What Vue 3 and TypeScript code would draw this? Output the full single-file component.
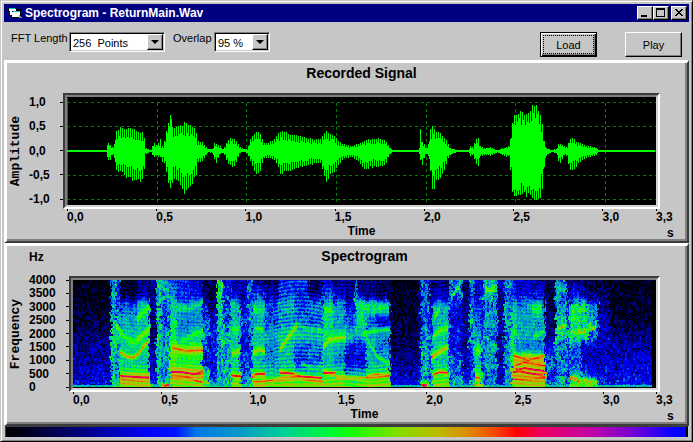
<script setup lang="ts">
import { onMounted, ref } from 'vue'

type Envelope = [x: number, up: number, down: number]
type Segment = [from: number, to: number, profile: number[]]
type Ridge = { level: number; width: number; points: [number, number][] }

const fftLengths = ['128  Points', '256  Points', '512  Points']
const overlaps = ['50 %', '75 %', '95 %']
const fftLength = ref('256  Points')
const overlap = ref('95 %')

const times = ['0,0', '0,5', '1,0', '1,5', '2,0', '2,5', '3,0', '3,3']
const amplitudes = ['1,0', '0,5', '0,0', '-0,5', '-1,0']
const frequencies = ['4000', '3500', '3000', '2500', '2000', '1500', '1000', '500', '0']

/* Repeatable pseudo-random value in 0..1 for a grid cell */
function hash(x: number, y: number): number {
  let h = Math.imul(x + 101, 374761393) ^ Math.imul(y + 57, 668265263)
  h = Math.imul(h ^ (h >>> 13), 1274126177)
  return ((h ^ (h >>> 16)) >>> 0) / 4294967296
}

/* ---- Recorded signal ---- */
const waveWidth = 589
const waveHeight = 108
const envelope: Envelope[] = [
  [0, 0, 0], [8, 0, 0], [10, 1, 0], [12, 0, 0], [39, 0, 0], [40, 8, 9], [43, 5, 8], [45, 3, 3], [47, 6, 6],
  [48, 16, 18], [50, 20, 21], [54, 24, 21], [60, 22, 27], [66, 21, 28], [71, 19, 30], [75, 17, 28],
  [77, 12, 18], [78, 2, 2], [84, 0, 0], [86, 8, 6], [89, 5, 4], [92, 8, 5], [93, 11, 5], [94, 4, 11],
  [96, 3, 8], [98, 14, 16], [100, 26, 26], [101, 28, 30], [103, 34, 38], [104, 37, 34], [105, 22, 32],
  [108, 24, 28], [112, 25, 31], [117, 27, 41], [122, 25, 37], [126, 23, 30], [129, 18, 22], [130, 9, 12],
  [134, 9, 10], [138, 4, 5], [141, 1, 0], [145, 1, 1], [147, 7, 7], [149, 6, 12], [152, 5, 3],
  [155, 1, 1], [158, 4, 4], [160, 9, 12], [164, 13, 15], [168, 10, 13], [172, 4, 2], [176, 1, 0],
  [180, 1, 1], [183, 11, 10], [187, 17, 20], [190, 18, 23], [193, 17, 18], [196, 8, 7], [200, 7, 6],
  [206, 10, 7], [210, 17, 12], [213, 19, 22], [218, 18, 21], [224, 16, 18], [230, 15, 16], [236, 13, 15],
  [242, 12, 13], [248, 11, 12], [254, 12, 12], [256, 16, 24], [259, 20, 30], [262, 17, 25], [266, 16, 22],
  [270, 10, 15], [276, 6, 7], [284, 4, 5], [290, 6, 9], [296, 9, 17], [302, 11, 16], [310, 12, 15],
  [318, 10, 13], [322, 3, 3], [325, 0, 0], [351, 0, 0], [352, 3, 3], [353, 21, 8], [355, 8, 14],
  [357, 6, 6], [359, 2, 2], [361, 6, 4], [363, 22, 20], [365, 25, 39], [367, 21, 38], [369, 18, 28],
  [373, 17, 27], [377, 13, 18], [380, 8, 8], [383, 2, 3], [386, 1, 2], [390, 0, 0], [401, 0, 0],
  [403, 4, 4], [406, 2, 3], [408, 12, 11], [411, 13, 15], [413, 4, 4], [417, 2, 3], [423, 3, 4],
  [430, 0, 0], [436, 2, 4], [440, 3, 5], [442, 5, 4], [444, 18, 30], [446, 34, 49], [449, 38, 47],
  [455, 37, 42], [460, 38, 44], [464, 42, 44], [467, 48, 50], [470, 44, 47], [473, 34, 46],
  [475, 26, 40], [477, 9, 15], [479, 2, 4], [484, 0, 0], [489, 1, 1], [491, 6, 9], [493, 6, 12],
  [497, 4, 3], [500, 3, 4], [502, 11, 19], [505, 12, 19], [509, 9, 15], [514, 6, 9], [520, 4, 6],
  [528, 3, 4], [531, 0, 0], [587, 0, 0],
]

function buildWave(): string {
  const parts: string[] = []
  let k = 0
  for (let x = 0; x <= 587; x++) {
    while (k < envelope.length - 2 && envelope[k + 1][0] <= x) k++
    const a = envelope[k]
    const b = envelope[k + 1]
    const t = Math.min(1, (x - a[0]) / (b[0] - a[0]))
    let up = a[1] + (b[1] - a[1]) * t
    let down = a[2] + (b[2] - a[2]) * t
    if (x % 2 === 0) {
      const loud = up > 30
      up *= (loud ? 0.66 : 0.48) + hash(x, 3) * 0.2
      down *= (loud ? 0.72 : 0.48) + hash(x, 9) * 0.18
    } else {
      up *= 0.92 + hash(x, 4) * 0.12
      down *= 0.9 + hash(x, 5) * 0.14
    }
    parts.push(`M${x} ${53 - Math.round(up)}h1V${55 + Math.round(down)}h-1z`)
  }
  return parts.join('')
}
const wave = buildWave()
const gridRows = [5, 29, 54, 78, 102]
const gridColumns = [90, 179, 269, 359, 448, 538]

/* ---- Spectrogram ---- */
const specWidth = 583
const specHeight = 108
const canvas = ref<HTMLCanvasElement | null>(null)

const palette: [number, number, number, number][] = [
  [0, 0, 0, 0], [0.03, 0, 0, 20], [0.12, 0, 0, 140], [0.21, 0, 0, 250], [0.25, 0, 20, 255],
  [0.29, 0, 110, 230], [0.34, 0, 150, 205], [0.41, 0, 210, 145], [0.48, 0, 250, 50], [0.51, 20, 255, 0],
  [0.57, 120, 225, 0], [0.63, 185, 190, 0], [0.68, 220, 140, 0], [0.72, 245, 70, 0], [0.75, 255, 0, 0],
  [0.79, 235, 0, 100], [0.86, 195, 0, 165], [0.92, 120, 0, 210], [0.98, 10, 0, 255], [1, 0, 0, 255],
]

/* Level at 4000, 3500 ... 0 Hz for each stretch of time */
const segments: Segment[] = [
  [0, 38, [0.02, 0.03, 0.04, 0.06, 0.09, 0.13, 0.15, 0.17, 0.22]],
  [38, 43, [0.34, 0.36, 0.38, 0.42, 0.43, 0.38, 0.38, 0.39, 0.46]],
  [43, 47, [0.25, 0.22, 0.28, 0.34, 0.42, 0.35, 0.36, 0.34, 0.44]],
  [47, 64, [0.05, 0.06, 0.31, 0.36, 0.4, 0.42, 0.41, 0.46, 0.6]],
  [64, 76, [0.11, 0.16, 0.42, 0.41, 0.4, 0.44, 0.4, 0.46, 0.6]],
  [76, 83, [0.14, 0.1, 0.12, 0.12, 0.1, 0.14, 0.14, 0.17, 0.35]],
  [83, 88, [0.42, 0.4, 0.39, 0.4, 0.42, 0.38, 0.37, 0.36, 0.42]],
  [88, 97, [0.35, 0.36, 0.28, 0.26, 0.34, 0.35, 0.35, 0.32, 0.45]],
  [97, 103, [0.27, 0.33, 0.42, 0.43, 0.46, 0.5, 0.54, 0.58, 0.57]],
  [103, 117, [0.24, 0.25, 0.36, 0.31, 0.36, 0.47, 0.48, 0.58, 0.58]],
  [117, 129, [0.2, 0.22, 0.36, 0.32, 0.4, 0.5, 0.48, 0.56, 0.58]],
  [129, 136, [0.08, 0.12, 0.22, 0.3, 0.34, 0.26, 0.2, 0.46, 0.54]],
  [136, 144, [0.1, 0.07, 0.1, 0.18, 0.24, 0.22, 0.2, 0.24, 0.38]],
  [144, 150, [0.44, 0.46, 0.42, 0.42, 0.38, 0.38, 0.38, 0.35, 0.4]],
  [150, 158, [0.2, 0.24, 0.27, 0.26, 0.36, 0.38, 0.35, 0.36, 0.42]],
  [158, 167, [0.14, 0.18, 0.4, 0.38, 0.4, 0.42, 0.41, 0.5, 0.6]],
  [167, 174, [0.14, 0.15, 0.2, 0.26, 0.22, 0.2, 0.26, 0.25, 0.42]],
  [174, 179, [0.3, 0.27, 0.31, 0.32, 0.3, 0.22, 0.24, 0.3, 0.5]],
  [179, 192, [0.12, 0.27, 0.4, 0.36, 0.4, 0.41, 0.39, 0.5, 0.6]],
  [192, 206, [0.1, 0.15, 0.29, 0.27, 0.37, 0.32, 0.34, 0.42, 0.58]],
  [206, 222, [0.25, 0.27, 0.38, 0.34, 0.41, 0.4, 0.38, 0.5, 0.6]],
  [222, 235, [0.27, 0.24, 0.28, 0.31, 0.4, 0.29, 0.25, 0.4, 0.6]],
  [235, 250, [0.08, 0.12, 0.33, 0.28, 0.4, 0.32, 0.29, 0.42, 0.6]],
  [250, 260, [0.2, 0.28, 0.43, 0.42, 0.43, 0.4, 0.4, 0.5, 0.6]],
  [260, 272, [0.12, 0.18, 0.36, 0.36, 0.38, 0.37, 0.31, 0.48, 0.6]],
  [272, 282, [0.12, 0.14, 0.24, 0.28, 0.39, 0.21, 0.18, 0.34, 0.57]],
  [282, 284, [0.27, 0.33, 0.43, 0.38, 0.42, 0.25, 0.23, 0.38, 0.57]],
  [284, 293, [0.1, 0.14, 0.42, 0.43, 0.4, 0.24, 0.2, 0.38, 0.58]],
  [293, 303, [0.12, 0.12, 0.4, 0.29, 0.36, 0.38, 0.37, 0.48, 0.6]],
  [303, 317, [0.08, 0.1, 0.35, 0.2, 0.35, 0.31, 0.36, 0.5, 0.6]],
  [317, 345, [0.02, 0.04, 0.04, 0.05, 0.07, 0.09, 0.12, 0.17, 0.22]],
  [345, 348, [0.08, 0.1, 0.12, 0.14, 0.15, 0.16, 0.17, 0.2, 0.33]],
  [348, 356, [0.27, 0.31, 0.29, 0.28, 0.31, 0.34, 0.38, 0.36, 0.55]],
  [356, 359, [0.15, 0.13, 0.17, 0.17, 0.25, 0.3, 0.27, 0.3, 0.35]],
  [359, 376, [0.1, 0.16, 0.37, 0.38, 0.4, 0.42, 0.4, 0.48, 0.6]],
  [376, 389, [0.31, 0.29, 0.21, 0.18, 0.22, 0.22, 0.28, 0.29, 0.4]],
  [389, 396, [0.09, 0.1, 0.12, 0.13, 0.14, 0.14, 0.15, 0.18, 0.3]],
  [396, 401, [0.36, 0.28, 0.34, 0.35, 0.32, 0.3, 0.25, 0.26, 0.4]],
  [401, 408, [0.2, 0.17, 0.26, 0.31, 0.36, 0.44, 0.4, 0.48, 0.6]],
  [408, 411, [0.2, 0.24, 0.26, 0.25, 0.27, 0.34, 0.24, 0.27, 0.42]],
  [411, 424, [0.38, 0.37, 0.31, 0.35, 0.32, 0.34, 0.34, 0.27, 0.35]],
  [424, 431, [0.17, 0.12, 0.13, 0.15, 0.13, 0.14, 0.14, 0.15, 0.25]],
  [431, 438, [0.35, 0.28, 0.35, 0.34, 0.31, 0.34, 0.34, 0.34, 0.36]],
  [438, 443, [0.25, 0.26, 0.38, 0.41, 0.46, 0.42, 0.5, 0.64, 0.57]],
  [443, 472, [0.15, 0.21, 0.35, 0.36, 0.37, 0.31, 0.54, 0.64, 0.6]],
  [472, 482, [0.07, 0.07, 0.08, 0.09, 0.13, 0.2, 0.28, 0.25, 0.35]],
  [482, 494, [0.35, 0.35, 0.31, 0.42, 0.4, 0.35, 0.3, 0.32, 0.38]],
  [494, 496, [0.15, 0.13, 0.18, 0.25, 0.26, 0.2, 0.22, 0.26, 0.35]],
  [496, 508, [0.09, 0.22, 0.44, 0.45, 0.46, 0.3, 0.28, 0.35, 0.55]],
  [508, 516, [0.07, 0.16, 0.42, 0.43, 0.41, 0.19, 0.18, 0.27, 0.52]],
  [516, 525, [0.05, 0.1, 0.36, 0.34, 0.27, 0.16, 0.17, 0.23, 0.48]],
  [525, 536, [0.06, 0.1, 0.12, 0.16, 0.17, 0.16, 0.18, 0.21, 0.28]],
  [536, 579, [0.02, 0.04, 0.04, 0.06, 0.1, 0.15, 0.18, 0.2, 0.25]],
]

const ridges: Ridge[] = [
  { level: 0.52, width: 3, points: [[43, 46], [50, 55], [56, 60], [62, 61], [69, 54], [76, 48]] },
  { level: 0.57, width: 3, points: [[64, 60], [70, 54], [76, 49]] },
  { level: 0.68, width: 2, points: [[47, 72], [53, 76], [60, 77], [65, 73], [70, 66], [76, 60]] },
  { level: 0.53, width: 3, points: [[64, 40], [68, 33], [76, 28]] },
  { level: 0.66, width: 6, points: [[47, 98], [76, 98]] },
  { level: 0.78, width: 1, points: [[47, 96], [57, 96], [76, 97]] },
  { level: 0.62, width: 4, points: [[98, 68], [112, 70], [129, 70]] },
  { level: 0.71, width: 1, points: [[99, 67], [113, 71], [129, 69]] },
  { level: 0.66, width: 5, points: [[98, 92], [129, 94]] },
  { level: 0.78, width: 1, points: [[98, 91], [111, 92], [120, 94], [129, 91]] },
  { level: 0.73, width: 1, points: [[98, 97], [113, 97], [129, 102]] },
  { level: 0.44, width: 3, points: [[103, 27], [115, 28], [129, 21]] },
  { level: 0.5, width: 3, points: [[108, 62], [120, 54], [129, 51]] },
  { level: 0.7, width: 2, points: [[88, 105], [95, 105]] },
  { level: 0.52, width: 2, points: [[159, 49], [165, 49]] },
  { level: 0.6, width: 3, points: [[159, 73], [166, 71]] },
  { level: 0.73, width: 2, points: [[158, 95], [167, 96]] },
  { level: 0.47, width: 4, points: [[181, 28], [190, 29]] },
  { level: 0.54, width: 2, points: [[182, 48], [189, 49]] },
  { level: 0.61, width: 3, points: [[180, 72], [186, 69], [191, 71]] },
  { level: 0.73, width: 2, points: [[179, 96], [186, 93], [191, 94]] },
  { level: 0.6, width: 3, points: [[207, 68], [214, 58], [223, 46]] },
  { level: 0.74, width: 2, points: [[207, 92], [216, 93], [228, 96], [248, 98]] },
  { level: 0.67, width: 2, points: [[180, 102], [206, 99], [222, 97], [250, 102]] },
  { level: 0.44, width: 2, points: [[223, 43], [234, 49], [250, 51]] },
  { level: 0.44, width: 2, points: [[228, 83], [239, 88], [250, 86]] },
  { level: 0.53, width: 3, points: [[251, 29], [258, 30]] },
  { level: 0.45, width: 2, points: [[244, 49], [252, 51], [272, 52]] },
  { level: 0.6, width: 3, points: [[250, 67], [255, 60], [262, 58], [272, 57]] },
  { level: 0.74, width: 2, points: [[250, 92], [262, 93]] },
  { level: 0.66, width: 2, points: [[262, 97], [288, 98], [316, 95]] },
  { level: 0.71, width: 1, points: [[293, 96], [303, 94], [316, 95]] },
  { level: 0.45, width: 5, points: [[286, 25], [295, 28], [305, 28], [315, 29]] },
  { level: 0.5, width: 2, points: [[288, 34], [291, 52], [298, 67], [304, 77], [316, 83]] },
  { level: 0.5, width: 2, points: [[290, 54], [302, 50], [316, 49]] },
  { level: 0.78, width: 2, points: [[348, 105], [353, 105]] },
  { level: 0.53, width: 3, points: [[361, 36], [366, 29]] },
  { level: 0.56, width: 3, points: [[360, 56], [367, 50], [374, 48]] },
  { level: 0.64, width: 3, points: [[358, 77], [366, 71], [374, 67]] },
  { level: 0.72, width: 2, points: [[360, 95], [366, 91], [374, 93]] },
  { level: 0.55, width: 3, points: [[403, 70], [406, 70]] },
  { level: 0.68, width: 3, points: [[402, 97], [406, 98]] },
  { level: 0.46, width: 3, points: [[378, 15], [386, 7]] },
  { level: 0.5, width: 3, points: [[412, 9], [421, 9]] },
  { level: 0.48, width: 6, points: [[459, 29], [468, 29]] },
  { level: 0.5, width: 2, points: [[460, 56], [471, 51]] },
  { level: 0.65, width: 5, points: [[440, 79], [470, 79]] },
  { level: 0.65, width: 5, points: [[440, 93], [470, 93]] },
  { level: 0.74, width: 1, points: [[440, 75], [455, 80], [471, 75]] },
  { level: 0.75, width: 1, points: [[440, 86], [450, 82], [471, 85]] },
  { level: 0.79, width: 1, points: [[440, 92], [451, 87], [471, 91]] },
  { level: 0.76, width: 1, points: [[443, 89], [457, 93], [471, 96]] },
  { level: 0.71, width: 1, points: [[440, 98], [455, 99], [471, 98]] },
  { level: 0.56, width: 3, points: [[484, 47], [492, 46]] },
  { level: 0.58, width: 2, points: [[497, 52], [509, 51], [522, 47]] },
  { level: 0.66, width: 3, points: [[497, 98], [504, 99]] },
  { level: 0.6, width: 3, points: [[504, 99], [512, 101], [523, 102]] },
]

function paletteColour(value: number): [number, number, number] {
  const v = Math.max(0, Math.min(1, value))
  let i = 0
  while (i < palette.length - 2 && palette[i + 1][0] < v) i++
  const a = palette[i]
  const b = palette[i + 1]
  const t = (v - a[0]) / (b[0] - a[0])
  return [a[1] + (b[1] - a[1]) * t, a[2] + (b[2] - a[2]) * t, a[3] + (b[3] - a[3]) * t]
}

function ridgeLevel(x: number, y: number, current: number): number {
  let level = current
  for (const ridge of ridges) {
    const pts = ridge.points
    if (x < pts[0][0] || x > pts[pts.length - 1][0]) continue
    let i = 0
    while (i < pts.length - 2 && pts[i + 1][0] < x) i++
    const [x0, y0] = pts[i]
    const [x1, y1] = pts[i + 1]
    const distance = Math.abs(y - (y0 + ((y1 - y0) * (x - x0)) / (x1 - x0)))
    const weight = Math.exp(-(distance * distance) / (ridge.width * ridge.width * 1.2))
    if (ridge.level > level) level += (ridge.level - level) * weight
  }
  return level
}

function drawSpectrogram(target: HTMLCanvasElement): void {
  const context = target.getContext('2d')
  if (!context) return
  const image = context.createImageData(specWidth, specHeight)
  for (let x = 0; x < specWidth; x++) {
    for (let y = 0; y < specHeight; y++) {
      let value = 0
      if (x < 579 && y < specHeight - 1) {
        /* ragged borders between neighbouring stretches */
        const jitter = Math.round((hash(x >> 1, y >> 1) - 0.5) * 3 + (hash(3, y >> 2) - 0.5) * 2)
        const sx = Math.max(0, Math.min(578, x + jitter))
        const segment = segments.find((s) => sx >= s[0] && sx < s[1]) ?? segments[0]
        const warped = Math.max(0, Math.min(107, y + (hash(x >> 2, 12) - 0.5) * 5))
        const position = (y > 84 ? y : warped) / 13.5
        const row = Math.min(7, Math.floor(position))
        const raw = position - row
        const t = raw * raw * (3 - 2 * raw)
        value = segment[2][row] * (1 - t) + segment[2][row + 1] * t
        value = ridgeLevel(x, y, value)
        const voiced = segment[2][8] > 0.56
        if (voiced) {
          const curved = x > 200 && x < 250
          const bend = curved ? Math.pow((x - 226) / 9, 2) * (1 - y / 130) : Math.sin(x / 9) * 1.8
          const depth = y > 84 ? 0.055 : curved ? 0.05 : 0.024
          value += depth * Math.sin(y * 1.65 - bend)
        }
        const fine = hash(x, y) - 0.5
        const coarse = hash(x >> 1, (y >> 1) + 400) - 0.5
        const blotch = hash((x >> 1) + 900, (y >> 2) + 700) - 0.5
        const grain = voiced ? (value > 0.5 ? 0.025 : 0.07) : value > 0.24 ? 0.15 : 0.1
        value += grain * (fine * 0.8 + coarse + blotch * 0.8)
        if (value < 0.3 && hash(x + 31, y + 77) > 0.94) value *= 0.3
        if (voiced && value < 0.46 && x % 3 === 0 && y % 3 === 0) value -= 0.05
        if (y >= 105) value = Math.max(value, 0.38 + fine * 0.1)
      }
      const [r, g, b] = paletteColour(value)
      const offset = (y * specWidth + x) * 4
      image.data[offset] = r
      image.data[offset + 1] = g
      image.data[offset + 2] = b
      image.data[offset + 3] = 255
    }
  }
  context.putImageData(image, 0, 0)
}

onMounted(() => {
  if (canvas.value) drawSpectrogram(canvas.value)
})
</script>

<template>
  <main class="window">
    <header class="titlebar">
      <svg class="app-icon" width="16" height="14" viewBox="0 0 16 14" shape-rendering="crispEdges" aria-hidden="true">
        <path fill="#000" d="M0 2h9v1h4v9H4v-2H1V6H0z" />
        <path fill="#fff" d="M1 3h7v2H4v1h8v5H4V9H2V5H1z" />
        <path fill="#00c8c8" d="M1 2h6v1H1zM5 5h7v1H5z" />
        <path fill="#8a8a8a" d="M11 9h1v1h1v1h1v1h-3z" />
      </svg>
      <h1>Spectrogram - ReturnMain.Wav</h1>
      <div class="caption-buttons">
        <button type="button" aria-label="Minimize">
          <svg width="12" height="10" viewBox="0 0 12 10" shape-rendering="crispEdges"><path d="M2 7h6v2H2z" /></svg>
        </button>
        <button type="button" aria-label="Maximize">
          <svg width="12" height="10" viewBox="0 0 12 10" shape-rendering="crispEdges">
            <path fill-rule="evenodd" d="M1 0h9v9H1zM2 2v6h7V2z" />
          </svg>
        </button>
        <button type="button" class="close" aria-label="Close">
          <svg width="12" height="10" viewBox="0 0 12 10" shape-rendering="crispEdges">
            <path d="M2 1h2v1h1v1h2V2h1V1h2v1H9v1H8v1H7v1h1v1h1v1h1v1H8V7H7V6H5v1H4v1H2V7h1V6h1V5h1V4H4V3H3V2H2z" />
          </svg>
        </button>
      </div>
    </header>

    <div class="toolbar">
      <label class="label-fft" for="fft-length">FFT Length</label>
      <span class="combo combo-fft">
        <select id="fft-length" v-model="fftLength">
          <option v-for="item in fftLengths" :key="item" :value="item">{{ item.replace('  ', '\u00a0 ') }}</option>
        </select>
        <span class="arrow" aria-hidden="true"></span>
      </span>
      <label class="label-overlap" for="overlap">Overlap</label>
      <span class="combo combo-overlap">
        <select id="overlap" v-model="overlap">
          <option v-for="item in overlaps" :key="item" :value="item">{{ item }}</option>
        </select>
        <span class="arrow" aria-hidden="true"></span>
      </span>
      <div class="actions">
        <button type="button" class="push default"><span>Load</span></button>
        <button type="button" class="push"><span>Play</span></button>
      </div>
    </div>

    <section class="panel signal">
      <h2>Recorded Signal</h2>
      <span class="y-name">Amplitude</span>
      <ol class="y-axis">
        <li v-for="a in amplitudes" :key="a">{{ a }}</li>
      </ol>
      <div class="frame">
        <svg class="plot" :viewBox="`0 0 ${waveWidth} ${waveHeight}`" preserveAspectRatio="none" shape-rendering="crispEdges" role="img" aria-label="Recorded Signal">
          <defs>
            <pattern id="dash-row" width="6" height="1" patternUnits="userSpaceOnUse"><rect width="3" height="1" fill="#008000" /></pattern>
            <pattern id="dash-column" width="1" height="6" patternUnits="userSpaceOnUse"><rect width="1" height="3" fill="#008000" /></pattern>
          </defs>
          <rect :width="waveWidth" :height="waveHeight" fill="#000" />
          <rect width="1" y="1" :height="waveHeight - 1" fill="#008000" />
          <rect v-for="y in gridRows" :key="y" x="0" :y="y" :width="waveWidth" height="1" fill="url(#dash-row)" />
          <rect v-for="x in gridColumns" :key="x" :x="x" y="4" width="1" :height="waveHeight - 4" fill="url(#dash-column)" />
          <path :d="wave" fill="#00ff00" />
        </svg>
      </div>
      <ol class="x-axis">
        <li v-for="t in times" :key="t">{{ t }}</li>
      </ol>
      <span class="x-name">Time</span>
      <span class="x-unit">s</span>
    </section>

    <section class="panel spectrum">
      <span class="y-unit">Hz</span>
      <h2>Spectrogram</h2>
      <span class="y-name">Frequency</span>
      <ol class="y-axis">
        <li v-for="f in frequencies" :key="f">{{ f }}</li>
      </ol>
      <div class="frame">
        <canvas ref="canvas" class="plot" :width="specWidth" :height="specHeight" role="img" aria-label="Spectrogram"></canvas>
      </div>
      <ol class="x-axis">
        <li v-for="t in times" :key="t">{{ t }}</li>
      </ol>
      <span class="x-name">Time</span>
      <span class="x-unit">s</span>
    </section>

    <div class="scale" aria-hidden="true"></div>
  </main>
</template>

<style>
body {
  margin: 0;
  background: #c6c6c6;
}
</style>

<style scoped>
.window {
  box-sizing: border-box;
  padding: 3px;
  background: #c6c6c6;
  border: 1px solid;
  border-color: #c6c6c6 #000 #000 #c6c6c6;
  box-shadow: inset 1px 1px #fff, inset -1px -1px #808080;
  color: #000;
  font-family: 'Liberation Sans', Arial, sans-serif;
  font-size: 11px;
  line-height: 12px;
}

.titlebar {
  display: flex;
  align-items: center;
  height: 18px;
  padding: 0 2px 0 4px;
  background: #000080;
}

.app-icon {
  margin-right: 1px;
}

h1 {
  flex: 1;
  margin: 0;
  color: #fff;
  font-size: 12px;
  line-height: 16px;
}

.caption-buttons {
  display: flex;
}

.caption-buttons button {
  display: block;
  width: 16px;
  height: 14px;
  padding: 1px;
  background: #c6c6c6;
  border: 1px solid;
  border-color: #fff #000 #000 #fff;
  box-shadow: inset -1px -1px #808080;
}

.caption-buttons svg {
  display: block;
}

.caption-buttons .close {
  margin-left: 2px;
}

.toolbar {
  display: flex;
  align-items: flex-start;
  height: 28px;
  padding: 10px 7px 0;
}

.label-fft {
  width: 58px;
}

.label-overlap {
  width: 41px;
  margin-left: 8px;
}

.combo {
  display: grid;
  box-sizing: border-box;
  height: 20px;
  background: #fff;
  border: 1px solid;
  border-color: #808080 #fff #fff #808080;
  box-shadow: inset 1px 1px #000, inset -1px -1px #c6c6c6;
}

.combo-fft {
  width: 96px;
}

.combo-overlap {
  width: 56px;
}

.combo select {
  grid-area: 1 / 1;
  width: 100%;
  padding: 1px 18px 0 3px;
  appearance: none;
  background: transparent;
  border: 0;
  color: #000;
  font: 11px 'Liberation Sans', Arial, sans-serif;
}

.arrow {
  display: grid;
  grid-area: 1 / 1;
  place-items: center;
  justify-self: end;
  box-sizing: border-box;
  width: 16px;
  margin: 1px 1px 1px 0;
  background: #c6c6c6;
  border: 1px solid;
  border-color: #fff #000 #000 #fff;
  box-shadow: inset -1px -1px #808080;
  pointer-events: none;
}

.arrow::before {
  content: '';
  border: 4px solid transparent;
  border-top-color: #000;
  border-bottom: 0;
}

.actions {
  display: flex;
  gap: 28px;
  margin-left: auto;
}

.push {
  box-sizing: border-box;
  width: 57px;
  height: 25px;
  padding: 2px;
  background: #c6c6c6;
  border: 1px solid;
  border-color: #fff #000 #000 #fff;
  box-shadow: inset -1px -1px #808080;
  color: #000;
  font: 11px 'Liberation Sans', Arial, sans-serif;
}

.push.default {
  border-color: #000;
  box-shadow: inset 1px 1px #fff, inset -1px -1px #000, inset -2px -2px #808080;
}

.push span {
  display: grid;
  place-items: center;
  box-sizing: border-box;
  height: 100%;
}

.push.default span {
  border: 1px dotted #000;
}

.panel {
  display: grid;
  grid-template-rows: 30px auto 16px 14px;
  padding: 0 0 2px;
  border: 2px solid #3c3c3c;
  border-top: 3px solid #fff;
  border-left: 3px solid #fff;
  box-shadow: inset -2px -2px #808080;
  font-weight: bold;
  font-size: 12px;
}

.signal {
  grid-template-columns: 18px 38px minmax(0, 1fr) 27px;
}

.spectrum {
  grid-template-columns: 18px 44px minmax(0, 1fr) 27px;
}

h2 {
  grid-area: 1 / 3;
  margin: 2px 0 0;
  font-size: 14px;
  line-height: 16px;
  text-align: center;
}

.y-unit {
  grid-area: 1 / 2;
  padding: 5px 0 0 4px;
}

.y-name {
  grid-area: 2 / 1;
  place-self: center;
  font: bold 13px/16px 'Liberation Mono', monospace;
  writing-mode: vertical-rl;
  transform: rotate(180deg);
}

ol {
  margin: 0;
  padding: 0;
  list-style: none;
}

.y-axis {
  display: flex;
  grid-area: 2 / 2;
  flex-direction: column;
  justify-content: space-between;
}

.signal .y-axis {
  padding: 3px 0 4px 4px;
}

.spectrum .y-axis {
  margin: -2px 0 -1px;
  padding-left: 4px;
}

.y-axis li {
  display: flex;
  align-items: center;
  justify-content: space-between;
}

.y-axis li::after {
  content: '';
  width: 3px;
  height: 1px;
  background: #000;
}

.frame {
  grid-area: 2 / 3;
  border: 2px solid;
  border-color: #3c3c3c #fff #fff #3c3c3c;
}

.plot {
  display: block;
  box-sizing: border-box;
  width: 100%;
  height: 112px;
  border: 2px solid;
  border-color: #808080 #d4d4d4 #d4d4d4 #808080;
}

.x-axis {
  display: grid;
  grid-area: 3 / 3;
  grid-template-columns: repeat(6, minmax(0, 5fr)) minmax(0, 3fr) 0;
  padding: 0 4px;
}

.x-axis li {
  white-space: nowrap;
}

.x-axis li::before {
  content: '';
  display: block;
  width: 1px;
  height: 2px;
  background: #000;
}

.x-name {
  grid-area: 4 / 3;
  text-align: center;
}

.x-unit {
  grid-area: 4 / 4;
  padding: 2px 0 0 7px;
}

.scale {
  height: 10px;
  margin: 0 1px 1px;
  border: 1px solid #3c3c3c;
  border-right: 2px solid #000;
  border-bottom: 0;
  background: linear-gradient(
    to right,
    #000 0%,
    #000014 2%,
    #00008c 12%,
    #0000fa 21%,
    #0014ff 25%,
    #0078e6 28%,
    #0096cd 34%,
    #00d291 41%,
    #00fa32 48%,
    #14ff00 51%,
    #78e100 57%,
    #b9be00 63%,
    #dc8c00 68%,
    #f54600 72%,
    #ff0000 75%,
    #eb0064 79%,
    #c300a5 86%,
    #7800d2 92%,
    #0a00ff 98%,
    #0000ff 100%
  );
}
</style>
